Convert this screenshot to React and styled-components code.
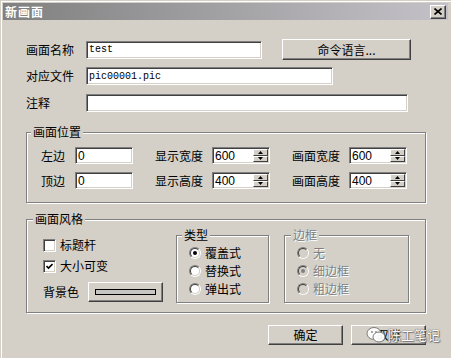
import React from 'react'
import styled, { createGlobalStyle } from 'styled-components'

const GlobalStyle = createGlobalStyle`
  html, body {
    margin: 0;
    padding: 0;
    background: #d4d0c8;
    overflow: hidden;
  }
  body {
    font-family: "Noto Sans CJK SC", "Liberation Sans", sans-serif;
    font-size: 12px;
    color: #000;
  }
`

// the screenshot is cropped inside the dialog, so only the light top/left frame shows
const Window = styled.div`
  position: relative;
  width: 451px;
  height: 358px;
  box-sizing: border-box;
  background: #d4d0c8;
  border-top: 1px solid #d4d0c8;
  border-left: 1px solid #d4d0c8;
  box-shadow: inset 1px 1px 0 #fff;
  padding: 2px 3px 0 2px;
`

const TitleBar = styled.div`
  height: 17px;
  display: flex;
  align-items: center;
  justify-content: space-between;
  padding: 0 2px 0 2px;
  background: linear-gradient(to right, #808080, #c4c2c8);
`

const TitleText = styled.span`
  color: #fff;
  font-weight: bold;
  font-size: 12px;
  line-height: 17px;
  letter-spacing: 1px;
`

const CloseButton = styled.div`
  width: 14px;
  height: 12px;
  background: #d4d0c8;
  border: 1px solid;
  border-color: #fff #404040 #404040 #fff;
  box-shadow: inset -1px -1px 0 #808080;
  display: flex;
  align-items: center;
  justify-content: center;
`

const Body = styled.div`
  padding: 19px 0 0 23px;
`

const FormRow = styled.div`
  display: flex;
  align-items: center;
  height: ${p => p.$h}px;
  margin-top: ${p => p.$mt || 0}px;
`

const Label = styled.span`
  width: ${p => p.$w}px;
  flex: none;
  line-height: 14px;
  white-space: nowrap;
  color: ${p => (p.$disabled ? '#808080' : '#000')};
  text-shadow: ${p => (p.$disabled ? '1px 1px 0 #fff' : 'none')};
`

const Field = styled.div`
  position: relative;
  width: ${p => p.$w}px;
  height: ${p => p.$h || 18}px;
  box-sizing: border-box;
  flex: none;
  background: #fff;
  border: 1px solid;
  border-color: #808080 #fff #fff #808080;
  box-shadow: inset 1px 1px 0 #404040, inset -1px -1px 0 #d4d0c8;
  padding: 0 0 0 2px;
  display: flex;
  align-items: center;
  font-family: ${p => (p.$mono ? '"Liberation Mono", monospace' : '"Liberation Sans", sans-serif')};
  font-size: ${p => (p.$mono ? 10 : 12)}px;
  overflow: hidden;
`

const PushButton = styled.div`
  width: ${p => p.$w}px;
  height: ${p => p.$h}px;
  box-sizing: border-box;
  flex: none;
  margin-left: ${p => p.$ml || 0}px;
  background: #d4d0c8;
  border: 1px solid;
  border-color: #fff #404040 #404040 #fff;
  box-shadow: inset -1px -1px 0 #808080;
  display: flex;
  align-items: center;
  justify-content: center;
  line-height: 14px;
`

const GroupBox = styled.div`
  position: relative;
  width: ${p => p.$w}px;
  height: ${p => (p.$h ? `${p.$h}px` : 'auto')};
  box-sizing: border-box;
  flex: none;
  margin-top: ${p => p.$mt || 0}px;
  margin-left: ${p => p.$ml || 0}px;
  border: 1px solid #808080;
  box-shadow: inset 1px 1px 0 #fff, 1px 1px 0 #fff;
  padding: ${p => p.$pad};
`

const Legend = styled.span`
  position: absolute;
  top: -7px;
  left: ${p => p.$left}px;
  padding: 0 2px;
  line-height: 12px;
  background: #d4d0c8;
  color: ${p => (p.$disabled ? '#808080' : '#000')};
  text-shadow: ${p => (p.$disabled ? '1px 1px 0 #fff' : 'none')};
`

const PosGrid = styled.div`
  display: grid;
  grid-template-columns: 92px 115px 115px;
  column-gap: 22px;
  row-gap: 8px;
`

const Pair = styled.div`
  display: flex;
  align-items: center;
  height: 17px;
`

const Spinner = styled.div`
  position: absolute;
  right: 1px;
  top: 1px;
  bottom: 1px;
  width: 15px;
  display: flex;
  flex-direction: column;
`

const SpinBtn = styled.div`
  flex: 1;
  box-sizing: border-box;
  background: #d4d0c8;
  border: 1px solid;
  border-color: #fff #404040 #404040 #fff;
  display: flex;
  align-items: center;
  justify-content: center;
`

const StyleRow = styled.div`
  display: flex;
  align-items: flex-start;
`

const LeftCol = styled.div`
  width: 133px;
  flex: none;
  padding-top: 3px;
  display: flex;
  flex-direction: column;
`

const CheckRow = styled.div`
  display: flex;
  align-items: center;
  height: ${p => p.$h || 14}px;
  margin-top: ${p => p.$mt || 0}px;
  gap: 4px;
`

const CheckBox = styled.div`
  width: 13px;
  height: 13px;
  box-sizing: border-box;
  background: #fff;
  border: 1px solid;
  border-color: #808080 #fff #fff #808080;
  box-shadow: inset 1px 1px 0 #404040, inset -1px -1px 0 #d4d0c8;
  display: flex;
  align-items: center;
  justify-content: center;
`

const ColorButton = styled(PushButton)`
  margin-left: 5px;
`

const ColorBar = styled.div`
  width: 61px;
  height: 6px;
  box-sizing: border-box;
  border: 1px solid #000;
  background: #c8c6c2;
`

const RadioList = styled.div`
  display: flex;
  flex-direction: column;
  gap: 4px;
`

const RadioRow = styled.div`
  display: flex;
  align-items: center;
  height: 14px;
  gap: 4px;
`

const Radio = styled.div`
  width: 12px;
  height: 12px;
  box-sizing: border-box;
  border-radius: 50%;
  border: 1px solid;
  border-color: #808080 #fff #fff #808080;
  display: flex;
`

const RadioInner = styled.div`
  flex: 1;
  border-radius: 50%;
  border: 1px solid;
  border-color: #404040 #d4d0c8 #d4d0c8 #404040;
  background: ${p => (p.$disabled ? '#d4d0c8' : '#fff')};
  display: flex;
  align-items: center;
  justify-content: center;
`

const Dot = styled.div`
  width: 4px;
  height: 4px;
  border-radius: 50%;
  background: ${p => (p.$disabled ? '#808080' : '#000')};
`

const Footer = styled.div`
  display: flex;
  justify-content: flex-end;
  width: 400px;
  margin-top: 12px;
`

// channel watermark lying over the cancel button
const Watermark = styled.div`
  position: absolute;
  left: 365px;
  top: 325px;
  display: flex;
  align-items: center;
  gap: 2px;
  opacity: 0.95;
`

const WatermarkText = styled.span`
  font-size: 13px;
  line-height: 16px;
  color: #fff;
  text-shadow: 0 0 1px #555, 0 0 1px #555, 1px 1px 1px #777;
`

const SpinField = ({ value }) => (
  <Field $w={58} $h={17}>
    {value}
    <Spinner>
      <SpinBtn>
        <svg width="5" height="3" viewBox="0 0 5 3"><path d="M2.5 0 L5 3 L0 3 Z" fill="#000" /></svg>
      </SpinBtn>
      <SpinBtn>
        <svg width="5" height="3" viewBox="0 0 5 3"><path d="M0 0 L5 0 L2.5 3 Z" fill="#000" /></svg>
      </SpinBtn>
    </Spinner>
  </Field>
)

const RadioItem = ({ label, checked, disabled }) => (
  <RadioRow>
    <Radio>
      <RadioInner $disabled={disabled}>{checked && <Dot $disabled={disabled} />}</RadioInner>
    </Radio>
    <Label $disabled={disabled}>{label}</Label>
  </RadioRow>
)

export default function App() {
  return (
    <>
      <GlobalStyle />
      <Window>
        <TitleBar>
          <TitleText>新画面</TitleText>
          <CloseButton>
            <svg width="8" height="7" viewBox="0 0 8 7">
              <path d="M0.5 0.5 L7.5 6.5 M7.5 0.5 L0.5 6.5" stroke="#000" strokeWidth="1.6" />
            </svg>
          </CloseButton>
        </TitleBar>

        <Body>
          <FormRow $h={21}>
            <Label $w={60}>画面名称</Label>
            <Field $w={176} $mono>test</Field>
            <PushButton $w={129} $h={21} $ml={20}>命令语言...</PushButton>
          </FormRow>
          <FormRow $h={18} $mt={7}>
            <Label $w={60}>对应文件</Label>
            <Field $w={247} $mono>pic00001.pic</Field>
          </FormRow>
          <FormRow $h={18} $mt={9}>
            <Label $w={60}>注释</Label>
            <Field $w={322} $mono />
          </FormRow>

          <GroupBox $w={400} $mt={20} $pad="14px 0 13px 14px">
            <Legend $left={4}>画面位置</Legend>
            <PosGrid>
              <Pair><Label $w={34}>左边</Label><Field $w={58} $h={17}>0</Field></Pair>
              <Pair><Label $w={57}>显示宽度</Label><SpinField value="600" /></Pair>
              <Pair><Label $w={57}>画面宽度</Label><SpinField value="600" /></Pair>
              <Pair><Label $w={34}>顶边</Label><Field $w={58} $h={17}>0</Field></Pair>
              <Pair><Label $w={57}>显示高度</Label><SpinField value="400" /></Pair>
              <Pair><Label $w={57}>画面高度</Label><SpinField value="400" /></Pair>
            </PosGrid>
          </GroupBox>

          <GroupBox $w={400} $mt={16} $pad="15px 0 9px 16px">
            <Legend $left={6}>画面风格</Legend>
            <StyleRow>
              <LeftCol>
                <CheckRow>
                  <CheckBox />
                  <Label>标题杆</Label>
                </CheckRow>
                <CheckRow $mt={7}>
                  <CheckBox>
                    <svg width="7" height="7" viewBox="0 0 7 7">
                      <path d="M0.5 3 L2.5 5 L6.5 1" stroke="#000" strokeWidth="1.6" fill="none" />
                    </svg>
                  </CheckBox>
                  <Label>大小可变</Label>
                </CheckRow>
                <CheckRow $mt={9} $h={20}>
                  <Label>背景色</Label>
                  <ColorButton $w={75} $h={20}>
                    <ColorBar />
                  </ColorButton>
                </CheckRow>
              </LeftCol>

              <GroupBox $w={93} $h={68} $pad="10px 0 0 12px">
                <Legend $left={5}>类型</Legend>
                <RadioList>
                  <RadioItem label="覆盖式" checked />
                  <RadioItem label="替换式" />
                  <RadioItem label="弹出式" />
                </RadioList>
              </GroupBox>

              <GroupBox $w={125} $h={68} $ml={15} $pad="10px 0 0 12px">
                <Legend $left={6} $disabled>边框</Legend>
                <RadioList>
                  <RadioItem label="无" disabled />
                  <RadioItem label="细边框" checked disabled />
                  <RadioItem label="粗边框" disabled />
                </RadioList>
              </GroupBox>
            </StyleRow>
          </GroupBox>

          <Footer>
            <PushButton $w={75} $h={20}>确定</PushButton>
            <PushButton $w={75} $h={20} $ml={8}>取消</PushButton>
          </Footer>
        </Body>

        <Watermark>
          <svg width="20" height="18" viewBox="0 0 20 18">
            <ellipse cx="8" cy="7.5" rx="7" ry="6" fill="#fff" stroke="#777" strokeWidth="1" />
            <ellipse cx="13" cy="11" rx="6" ry="5" fill="#fff" stroke="#777" strokeWidth="1" />
            <circle cx="6" cy="6" r="1" fill="#888" />
            <circle cx="10" cy="6" r="1" fill="#888" />
          </svg>
          <WatermarkText>陈工笔记</WatermarkText>
        </Watermark>
      </Window>
    </>
  )
}
